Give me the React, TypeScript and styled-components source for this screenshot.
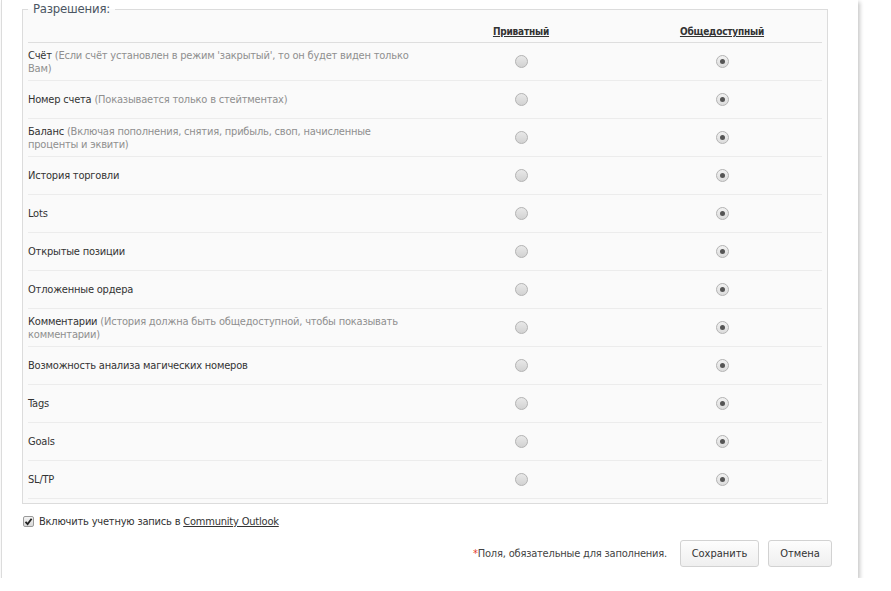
import React from 'react';
import styled, { createGlobalStyle } from 'styled-components';

interface Permission {
  title: string;
  note?: string;
}

const FONT = "Tahoma, 'DejaVu Sans Condensed', 'DejaVu Sans', sans-serif";

const GlobalStyle = createGlobalStyle`
  html, body {
    margin: 0;
    padding: 0;
    background: #ffffff;
  }
  body {
    font-family: ${FONT};
    font-stretch: condensed;
    font-size: 11px;
    letter-spacing: -0.2px;
    color: #333;
  }
`;

const Panel = styled.div`
  box-sizing: border-box;
  width: 857px;
  margin-left: 1px;
  padding: 0 31px 11px 20px;
  background: #fff;
  border-left: 1px solid #dcdcdc;
  box-shadow: 2px 2px 4px rgba(0, 0, 0, 0.22);
`;

const Fieldset = styled.fieldset`
  box-sizing: border-box;
  width: 806px;
  margin: 0;
  padding: 0 5px 4px 5px;
  border: 1px solid #dcdcdc;
  background: #fafafa;
`;

const Legend = styled.legend`
  margin-left: 0;
  padding: 0 5px;
  font-size: 13px;
  line-height: 18px;
  color: #4b5663;
`;

const Table = styled.table`
  width: 100%;
  border-collapse: collapse;
  margin-top: 3px;
`;

const HeadCell = styled.th<{ $width?: number }>`
  width: ${(p) => (p.$width ? `${p.$width}px` : 'auto')};
  height: 21px;
  padding: 0;
  text-align: center;
  vertical-align: middle;
  border-bottom: 1px solid #dedede;
`;

const HeadLink = styled.a`
  font-weight: bold;
  font-size: 10px;
  color: #333;
  text-decoration: underline;
`;

const Row = styled.tr`
  height: 38px;
  border-bottom: 1px solid #ececec;
`;

const LabelCell = styled.td`
  padding: 0;
  vertical-align: middle;
  line-height: 13px;
  color: #333;
`;

const Note = styled.span`
  color: #8f8f8f;
`;

const RadioCell = styled.td`
  text-align: center;
  vertical-align: middle;
  padding: 0;
`;

const Radio = styled.span<{ $checked?: boolean }>`
  display: inline-block;
  position: relative;
  box-sizing: border-box;
  width: 13px;
  height: 13px;
  margin-top: 3px;
  border-radius: 50%;
  border: 1px solid #b4b4b4;
  background: ${(p) =>
    p.$checked
      ? 'linear-gradient(#f2f2f2, #dcdcdc)'
      : 'linear-gradient(#e8e8e8, #d2d2d2)'};

  &::after {
    content: '';
    display: ${(p) => (p.$checked ? 'block' : 'none')};
    position: absolute;
    left: 3px;
    top: 3px;
    width: 5px;
    height: 5px;
    border-radius: 50%;
    background: #555;
  }
`;

const CheckRow = styled.label`
  display: flex;
  align-items: center;
  gap: 5px;
  margin-top: 11px;
  padding-left: 1px;
  color: #333;
`;

const CheckBox = styled.span`
  display: inline-flex;
  align-items: center;
  justify-content: center;
  box-sizing: border-box;
  width: 11px;
  height: 11px;
  border: 1px solid #9a9a9a;
  border-radius: 2px;
  background: linear-gradient(#f4f4f4, #d8d8d8);
`;

const Link = styled.a`
  color: #333;
  text-decoration: underline;
`;

const Footer = styled.div`
  display: flex;
  justify-content: flex-end;
  align-items: center;
  gap: 9px;
  margin-top: 12px;
  margin-right: -5px;
`;

const Required = styled.span`
  color: #444;
  margin-right: 4px;

  b {
    font-weight: normal;
    color: #e53b2c;
  }
`;

const Button = styled.button<{ $width: number }>`
  box-sizing: border-box;
  width: ${(p) => p.$width}px;
  height: 27px;
  padding: 0;
  font-family: ${FONT};
  font-stretch: condensed;
  font-size: 11px;
  color: #333;
  border: 1px solid #d2d2d2;
  border-radius: 3px;
  background: linear-gradient(#fdfdfd, #efefef);
`;

const permissions: Permission[] = [
  { title: 'Счёт', note: "(Если счёт установлен в режим 'закрытый', то он будет виден только Вам)" },
  { title: 'Номер счета', note: '(Показывается только в стейтментах)' },
  { title: 'Баланс', note: '(Включая пополнения, снятия, прибыль, своп, начисленные проценты и эквити)' },
  { title: 'История торговли' },
  { title: 'Lots' },
  { title: 'Открытые позиции' },
  { title: 'Отложенные ордера' },
  { title: 'Комментарии', note: '(История должна быть общедоступной, чтобы показывать комментарии)' },
  { title: 'Возможность анализа магических номеров' },
  { title: 'Tags' },
  { title: 'Goals' },
  { title: 'SL/TP' },
];

const App = (): JSX.Element => {
  return (
    <>
      <GlobalStyle />
      <Panel>
        <Fieldset>
          <Legend>Разрешения:</Legend>
          <Table>
            <thead>
              <tr>
                <HeadCell $width={392} />
                <HeadCell $width={202}>
                  <HeadLink>Приватный</HeadLink>
                </HeadCell>
                <HeadCell>
                  <HeadLink>Общедоступный</HeadLink>
                </HeadCell>
              </tr>
            </thead>
            <tbody>
              {permissions.map((p) => (
                <Row key={p.title}>
                  <LabelCell>
                    {p.title}
                    {p.note && <Note> {p.note}</Note>}
                  </LabelCell>
                  <RadioCell>
                    <Radio />
                  </RadioCell>
                  <RadioCell>
                    <Radio $checked />
                  </RadioCell>
                </Row>
              ))}
            </tbody>
          </Table>
        </Fieldset>
        <CheckRow>
          <CheckBox>
            <svg width="9" height="9" viewBox="0 0 9 9">
              <path d="M1.5 4.8 L3.6 7 L7.6 1.8" fill="none" stroke="#222" strokeWidth="1.8" />
            </svg>
          </CheckBox>
          <span>
            Включить учетную запись в <Link>Community Outlook</Link>
          </span>
        </CheckRow>
        <Footer>
          <Required>
            <b>*</b>Поля, обязательные для заполнения.
          </Required>
          <Button $width={79}>Сохранить</Button>
          <Button $width={64}>Отмена</Button>
        </Footer>
      </Panel>
    </>
  );
};

export default App;
